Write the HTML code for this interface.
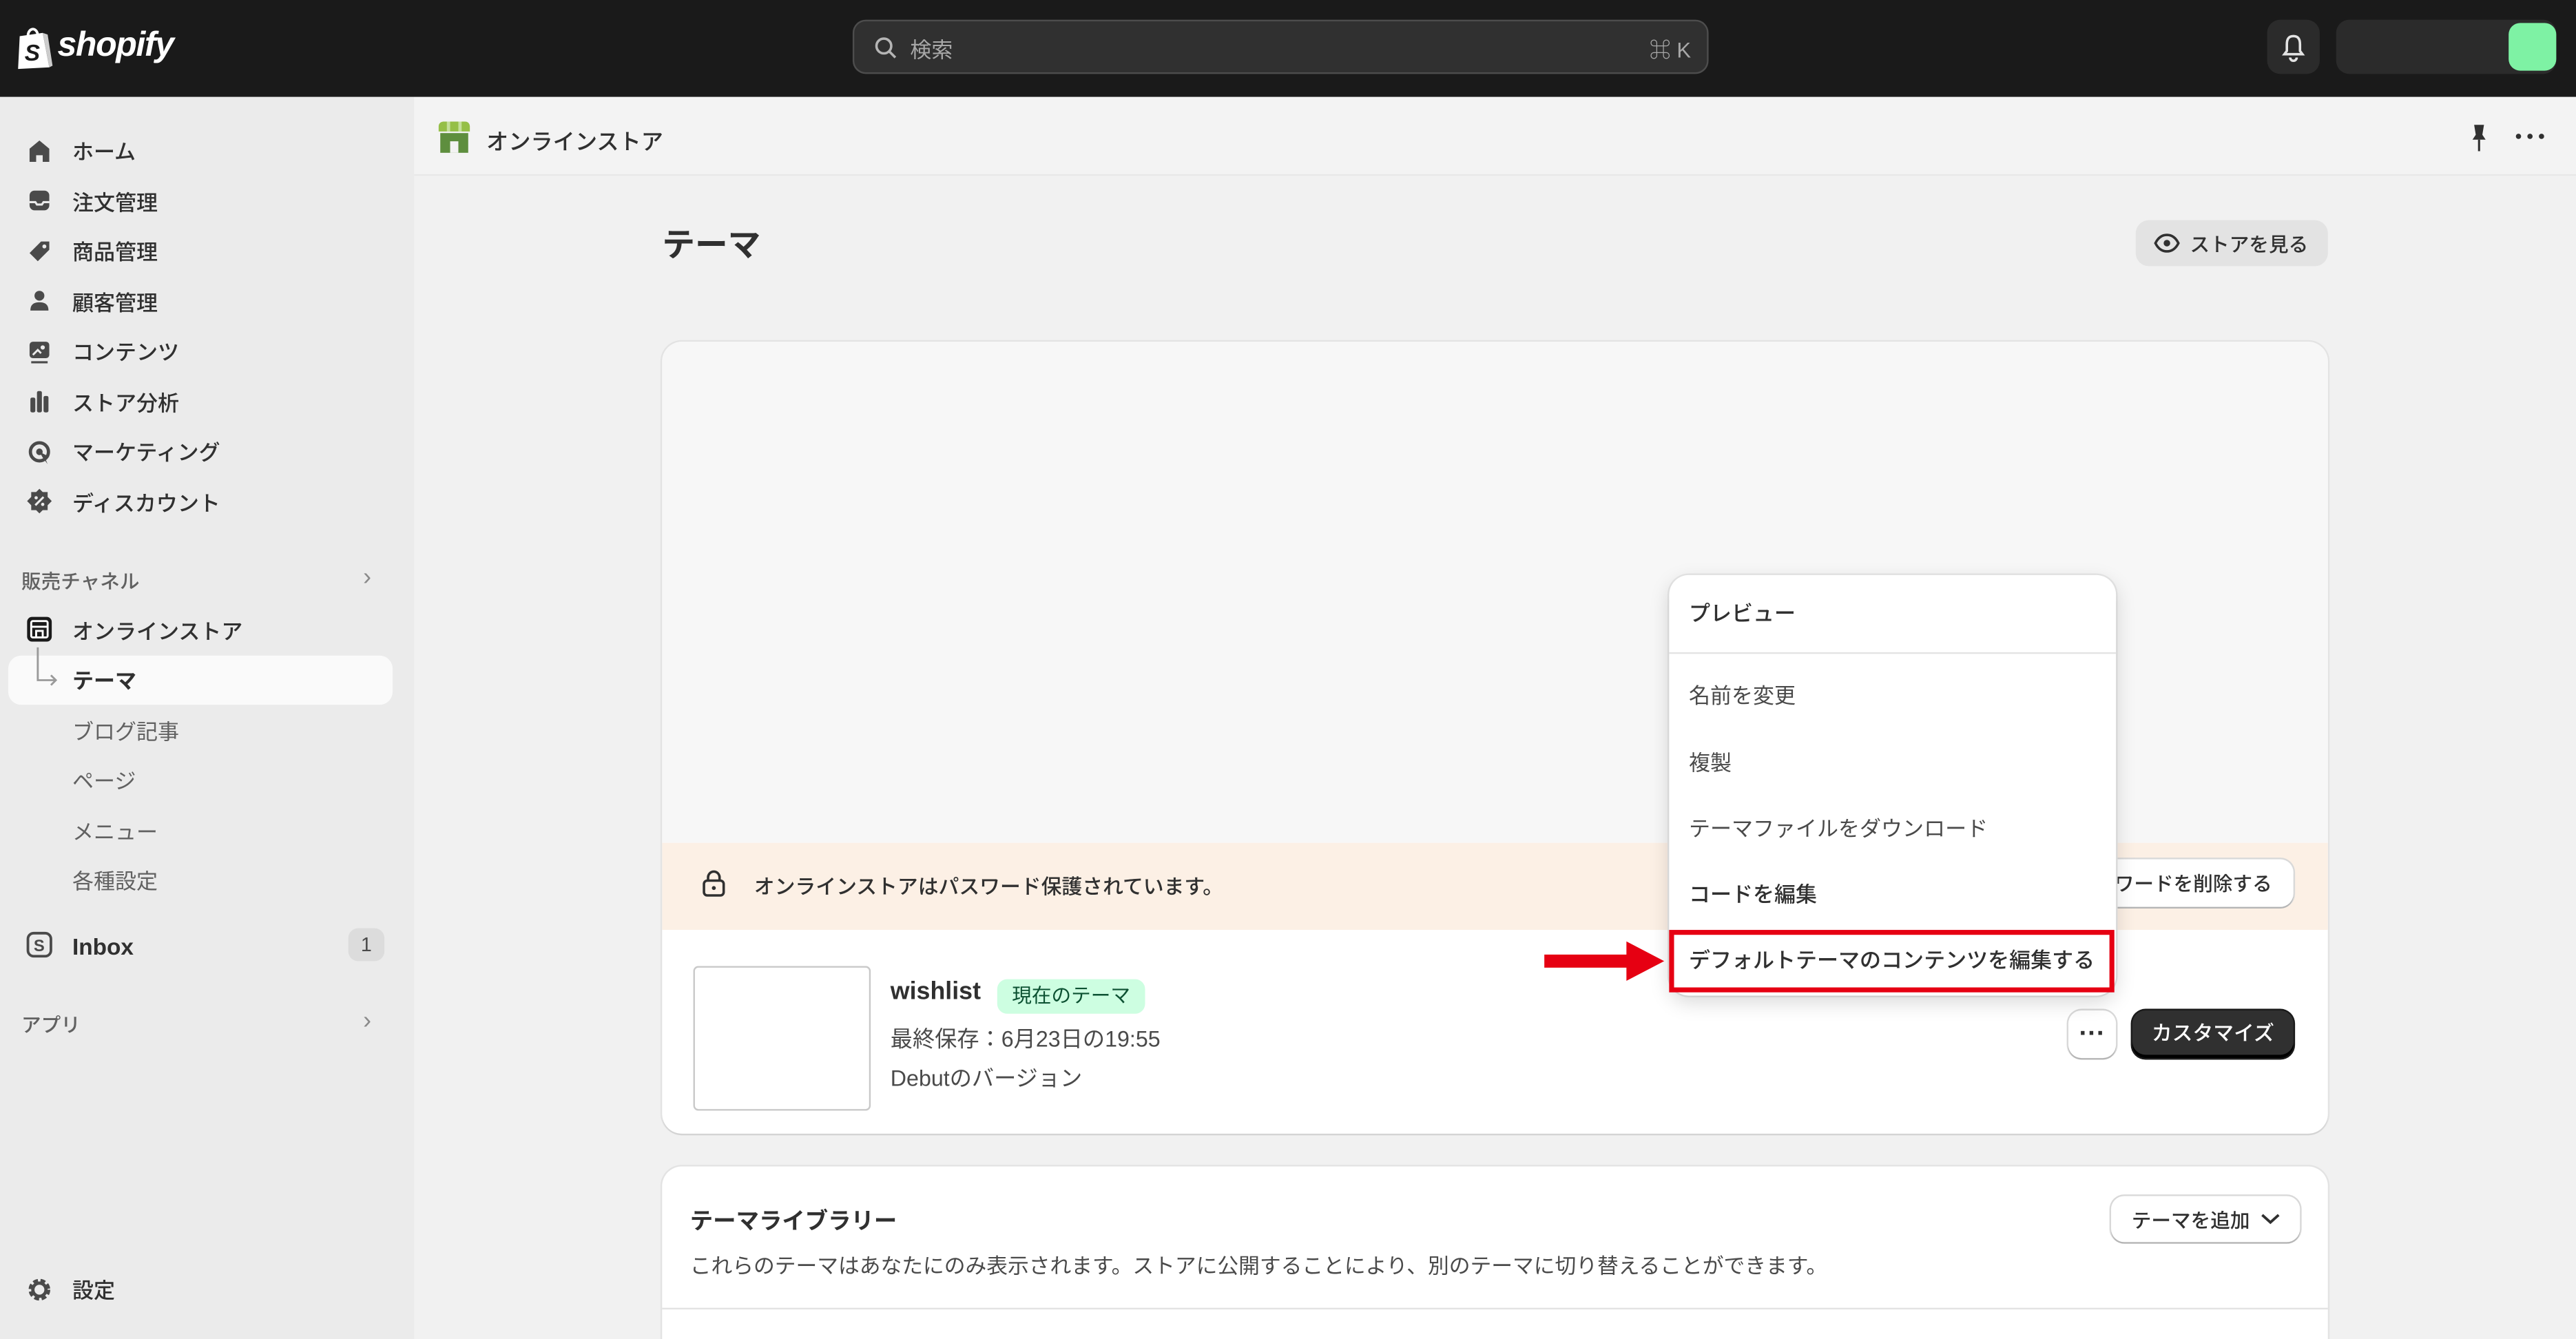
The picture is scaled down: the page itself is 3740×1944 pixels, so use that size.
<!DOCTYPE html>
<html><head><meta charset="utf-8"><style>
*{box-sizing:border-box;margin:0;padding:0}
html,body{width:3740px;height:1944px;overflow:hidden;background:#f1f1f1}
#w{position:absolute;left:0;top:0;width:1568px;height:815px;transform:scale(2.38520,2.38528);transform-origin:0 0;font-family:"Liberation Sans","Noto Sans CJK JP",sans-serif;color:#303030;font-size:13px;background:#f1f1f1;overflow:hidden}
.a{position:absolute;white-space:nowrap}
.top{left:0;top:0;width:1568px;height:59px;background:#1a1a1a}
.side{left:0;top:59px;width:252px;height:756px;background:#ebebeb}
.nav{position:absolute;left:44px;font-size:13px;font-weight:500;color:#303030;line-height:16px}
.ic{position:absolute;left:16px;width:16px;height:16px}
.sub{position:absolute;left:44px;font-size:13px;color:#616161;line-height:16px}
.card{background:#fff;border-radius:12px;box-shadow:0 1px 0 #d4d4d4,0 0 0 1px #e3e3e3}
.btn{position:absolute;white-space:nowrap;background:#fff;border-radius:8px;box-shadow:0 1px 0 #b5b5b5,0 0 0 1px #d9d9d9;font-size:12px;font-weight:500;display:flex;align-items:center;justify-content:center}
.mi{position:absolute;left:12px;font-size:13px;color:#303030;line-height:16px;white-space:nowrap}
</style></head><body><div id="w">
<div class="a top"></div>
<svg class="a" style="left:9px;top:16px" width="24" height="27" viewBox="0 0 24 27"><path d="M3 6 L17 4 L21 25 L2 26 Z" fill="#fff"/><path d="M8 6 C8 1 13 0 14 5" stroke="#fff" stroke-width="1.6" fill="none"/><path d="M17 4 L21 25 L23 24 L20 5Z" fill="#ccc"/><text x="6" y="21" font-family="Liberation Sans" font-weight="700" font-style="italic" font-size="14" fill="#1a1a1a">S</text></svg>
<div class="a" style="left:35px;top:16px;color:#fff;font-size:21px;font-weight:700;font-style:italic;letter-spacing:-0.6px">shopify</div>
<div class="a" style="left:519px;top:12px;width:521px;height:33px;background:#303030;border:1px solid #4d4d4d;border-radius:8px"></div>
<svg class="a" style="left:532px;top:22px" width="14" height="14" viewBox="0 0 14 14"><circle cx="6" cy="6" r="4.5" stroke="#b5b5b5" stroke-width="1.5" fill="none"/><path d="M9.5 9.5L13 13" stroke="#b5b5b5" stroke-width="1.5"/></svg>
<div class="a" style="left:554px;top:20px;color:#a8a8a8;font-size:13px">検索</div>
<div class="a" style="left:1004px;top:20px;color:#a8a8a8;font-size:13px">⌘ K</div>
<div class="a" style="left:1380px;top:12px;width:32px;height:33px;background:#2b2b2b;border-radius:8px"></div>
<svg class="a" style="left:1388px;top:20px" width="16" height="18" viewBox="0 0 16 18"><path d="M8 2C5 2 4 4 4 7V11L2.5 13H13.5L12 11V7C12 4 11 2 8 2Z" stroke="#e3e3e3" stroke-width="1.5" fill="none"/><path d="M6 15a2 2 0 0 0 4 0" stroke="#e3e3e3" stroke-width="1.5" fill="none"/></svg>
<div class="a" style="left:1422px;top:12px;width:134px;height:33px;background:#2b2b2b;border-radius:8px"></div>
<div class="a" style="left:1527px;top:14px;width:29px;height:29px;background:#7ef2a4;border-radius:7px"></div>

<div class="a side"></div>
<svg class="ic" style="top:84px" viewBox="0 0 16 16"><path d="M8 1.5L2 6.5V14.5H6V10.5H10V14.5H14V6.5Z" fill="#4a4a4a"/></svg><div class="nav" style="top:85px">ホーム</div>
<svg class="ic" style="top:114px" viewBox="0 0 16 16"><rect x="2" y="2" width="12" height="12" rx="3" fill="#4a4a4a"/><path d="M2 9H5.5L6.5 10.5H9.5L10.5 9H14" stroke="#ebebeb" stroke-width="1.3" fill="none"/></svg><div class="nav" style="top:116px">注文管理</div>
<svg class="ic" style="top:145px" viewBox="0 0 16 16"><path d="M9 2H14V7L7 14L2 9Z" fill="#4a4a4a"/><circle cx="11" cy="5" r="1.2" fill="#ebebeb"/></svg><div class="nav" style="top:146px">商品管理</div>
<svg class="ic" style="top:175px" viewBox="0 0 16 16"><circle cx="8" cy="5" r="3" fill="#4a4a4a"/><path d="M2.5 14C2.5 10 5 9 8 9S13.5 10 13.5 14Z" fill="#4a4a4a"/></svg><div class="nav" style="top:177px">顧客管理</div>
<svg class="ic" style="top:206px" viewBox="0 0 16 16"><rect x="2" y="2" width="12" height="10" rx="2" fill="#4a4a4a"/><circle cx="10" cy="5.5" r="1.3" fill="#ebebeb"/><path d="M4 10L7 7L9 9" stroke="#ebebeb" stroke-width="1.2" fill="none"/><path d="M3 14.5H13" stroke="#4a4a4a" stroke-width="1.3"/></svg><div class="nav" style="top:207px">コンテンツ</div>
<svg class="ic" style="top:236px" viewBox="0 0 16 16"><rect x="2.5" y="6" width="3" height="9" rx="1" fill="#4a4a4a"/><rect x="6.5" y="2" width="3" height="13" rx="1" fill="#4a4a4a"/><rect x="10.5" y="5" width="3" height="10" rx="1" fill="#4a4a4a"/></svg><div class="nav" style="top:238px">ストア分析</div>
<svg class="ic" style="top:267px" viewBox="0 0 16 16"><circle cx="8" cy="8" r="5.5" stroke="#4a4a4a" stroke-width="2" fill="none"/><circle cx="8" cy="8" r="2" fill="#4a4a4a"/><path d="M8 8L14 11L11.5 12L13 15.5L10 11.5Z" fill="#4a4a4a"/></svg><div class="nav" style="top:268px">マーケティング</div>
<svg class="ic" style="top:297px" viewBox="0 0 16 16"><path d="M8 0.5L10 2.5L13 2.5L13 5.5L15.5 8L13 10.5L13 13.5L10 13.5L8 15.5L6 13.5L3 13.5L3 10.5L0.5 8L3 5.5L3 2.5L6 2.5Z" fill="#4a4a4a"/><path d="M5.5 10.5L10.5 5.5" stroke="#ebebeb" stroke-width="1.3"/><circle cx="6" cy="6" r="1" fill="#ebebeb"/><circle cx="10" cy="10" r="1" fill="#ebebeb"/></svg><div class="nav" style="top:299px">ディスカウント</div>
<div class="a" style="left:13px;top:345px;font-size:12px;color:#616161;font-weight:500">販売チャネル</div>
<div class="a" style="left:221px;top:343px;font-size:15px;color:#8a8a8a">›</div>
<svg class="ic" style="top:375px" viewBox="0 0 16 16"><rect x="0.5" y="0.5" width="15" height="15" rx="3" fill="#1a1a1a"/><rect x="3" y="3" width="10" height="10" rx="1" stroke="#fff" stroke-width="1.2" fill="none"/><path d="M3 6.5H13M6 13V9H10V13" stroke="#fff" stroke-width="1.2" fill="none"/></svg><div class="nav" style="top:377px">オンラインストア</div>
<div class="a" style="left:5px;top:399px;width:234px;height:30px;background:#fafafa;border-radius:8px"></div>
<svg class="a" style="left:20px;top:394px" width="18" height="26" viewBox="0 0 18 26"><path d="M3 0V20H14M11 17L14 20L11 23" stroke="#9a9a9a" stroke-width="1.2" fill="none"/></svg>
<div class="nav" style="top:407px;font-weight:700">テーマ</div>
<div class="sub" style="top:438px">ブログ記事</div>
<div class="sub" style="top:468px">ページ</div>
<div class="sub" style="top:499px">メニュー</div>
<div class="sub" style="top:529px">各種設定</div>
<svg class="ic" style="top:567px" viewBox="0 0 16 16"><rect x="1" y="1" width="14" height="14" rx="3.5" stroke="#4a4a4a" stroke-width="1.6" fill="none"/><text x="4.5" y="12" font-size="10" font-weight="700" fill="#4a4a4a" font-family="Liberation Sans">S</text></svg><div class="nav" style="top:568px;font-size:14px;font-weight:700">Inbox</div>
<div class="a" style="left:212px;top:565px;width:22px;height:20px;background:#dcdcdc;border-radius:6px;font-size:12px;text-align:center;line-height:20px;color:#4a4a4a">1</div>
<div class="a" style="left:13px;top:615px;font-size:12px;color:#616161;font-weight:500">アプリ</div>
<div class="a" style="left:221px;top:613px;font-size:15px;color:#8a8a8a">›</div>
<svg class="ic" style="top:777px" viewBox="0 0 16 16"><circle cx="8" cy="8" r="5" stroke="#4a4a4a" stroke-width="3.2" fill="none" stroke-dasharray="2.6 1.4"/><circle cx="8" cy="8" r="4" stroke="#4a4a4a" stroke-width="2" fill="none"/></svg><div class="nav" style="top:778px">設定</div>

<div class="a" style="left:252px;top:59px;width:1316px;height:48px;background:#f3f3f3;border-bottom:1px solid #e8e8e8"></div>
<svg class="a" style="left:266px;top:73px" width="21" height="21" viewBox="0 0 21 21"><path d="M1 4C1 1 4 1 4 1H17C20 1 20 4 20 4V7H1Z" fill="#95bf47"/><path d="M7 1V7M14 1V7" stroke="#c5e09b" stroke-width="2"/><rect x="2" y="8" width="17" height="12" fill="#5e8e3e"/><rect x="8" y="13" width="5" height="7" fill="#f3f3f3"/></svg>
<div class="a" style="left:296px;top:75px;font-size:13.5px;font-weight:500">オンラインストア</div>
<svg class="a" style="left:1502px;top:75px" width="14" height="18" viewBox="0 0 14 18"><path d="M4 1H10L9 7L11 10H3L5 7Z" fill="#303030"/><path d="M7 10V17" stroke="#303030" stroke-width="1.3"/></svg>
<svg class="a" style="left:1531px;top:81px" width="18" height="4" viewBox="0 0 18 4"><circle cx="2" cy="2" r="1.6" fill="#303030"/><circle cx="9" cy="2" r="1.6" fill="#303030"/><circle cx="16" cy="2" r="1.6" fill="#303030"/></svg>

<div class="a" style="left:403px;top:133px;font-size:20px;font-weight:700">テーマ</div>
<div class="a" style="left:1300px;top:134px;width:117px;height:28px;background:#e3e3e3;border-radius:8px"></div>
<svg class="a" style="left:1311px;top:141px" width="16" height="14" viewBox="0 0 16 14"><path d="M1 7C3 3 5.5 2 8 2S13 3 15 7C13 11 10.5 12 8 12S3 11 1 7Z" stroke="#303030" stroke-width="1.5" fill="none"/><circle cx="8" cy="7" r="2" fill="#303030"/></svg>
<div class="a" style="left:1333px;top:140px;font-size:12px;font-weight:500">ストアを見る</div>

<div class="a card" style="left:403px;top:208px;width:1014px;height:482px;overflow:hidden">
<div class="a" style="left:0;top:0;width:1014px;height:305px;background:#f7f7f7"></div>
<div class="a" style="left:0;top:305px;width:1014px;height:53px;background:#fcf0e5"></div>
<svg class="a" style="left:24px;top:321px" width="15" height="17" viewBox="0 0 15 17"><rect x="1.5" y="7" width="12" height="9" rx="2" stroke="#303030" stroke-width="1.5" fill="none"/><path d="M4 7V5a3.5 3.5 0 0 1 7 0v2" stroke="#303030" stroke-width="1.5" fill="none"/><circle cx="7.5" cy="11.5" r="1.2" fill="#303030"/></svg>
<div class="a" style="left:56px;top:321px;font-size:12.5px;font-weight:500">オンラインストアはパスワード保護されています。</div>
<div class="btn" style="left:850px;top:315px;width:143px;height:29px;justify-content:flex-end;padding-right:13px">パスワードを削除する</div>
<div class="a" style="left:19px;top:380px;width:108px;height:88px;border:1px solid #c9c9c9;border-radius:3px;background:#fff"></div>
<div class="a" style="left:139px;top:387px;font-size:15px;font-weight:700">wishlist</div>
<div class="a" style="left:204px;top:388px;width:90px;height:21px;background:#cdfee1;border-radius:6px;font-size:12px;color:#0c5132;text-align:center;line-height:21px">現在のテーマ</div>
<div class="a" style="left:139px;top:413px;font-size:13.5px;color:#4a4a4a">最終保存：6月23日の19:55</div>
<div class="a" style="left:139px;top:437px;font-size:13.5px;color:#4a4a4a">Debutのバージョン</div>
<div class="btn" style="left:856px;top:407px;width:29px;height:29px;font-size:16px;font-weight:700">···</div>
<div class="a" style="left:895px;top:407px;width:98px;height:29px;background:#303030;border-radius:8px;box-shadow:inset 0 -2px 0 #000,0 0 0 1px #1a1a1a;color:#fff;font-size:12.5px;font-weight:500;text-align:center;line-height:29px">カスタマイズ</div>
</div>

<div class="a card" style="left:1016px;top:350px;width:272px;height:256px;box-shadow:0 4px 12px rgba(0,0,0,.15),0 0 0 1px #e8e8e8"></div>
<div class="a" style="left:1016px;top:397px;width:272px;height:1px;background:#e3e3e3"></div>
<div class="a" style="left:1016px;top:350px;width:272px;height:256px">
<div class="mi" style="top:16px;font-weight:500">プレビュー</div>
<div class="mi" style="top:66px;color:#4a4a4a">名前を変更</div>
<div class="mi" style="top:107px;color:#4a4a4a">複製</div>
<div class="mi" style="top:147px;color:#4a4a4a">テーマファイルをダウンロード</div>
<div class="mi" style="top:187px;font-weight:500">コードを編集</div>
<div class="mi" style="top:227px;font-weight:500">デフォルトテーマのコンテンツを編集する</div>
</div>
<div class="a" style="left:1016px;top:566px;width:271px;height:38px;border:3px solid #e60012"></div>
<svg class="a" style="left:940px;top:572px" width="74" height="26" viewBox="0 0 74 26"><path d="M0 9H50V1L73 13L50 25V17H0Z" fill="#e60012"/></svg>

<div class="a card" style="left:403px;top:710px;width:1014px;height:130px"></div>
<div class="a" style="left:403px;top:796px;width:1014px;height:1px;background:#e3e3e3"></div>
<div class="a" style="left:420px;top:733px;font-size:14px;font-weight:700">テーマライブラリー</div>
<div class="a" style="left:420px;top:760px;font-size:12.9px;color:#4a4a4a">これらのテーマはあなたにのみ表示されます。ストアに公開することにより、別のテーマに切り替えることができます。</div>
<div class="btn" style="left:1285px;top:728px;width:115px;height:28px;font-weight:500">テーマを追加 <svg width="12" height="8" viewBox="0 0 12 8" style="margin-left:6px"><path d="M1 1.5L6 6L11 1.5" stroke="#303030" stroke-width="1.6" fill="none"/></svg></div>
</div></body></html>
